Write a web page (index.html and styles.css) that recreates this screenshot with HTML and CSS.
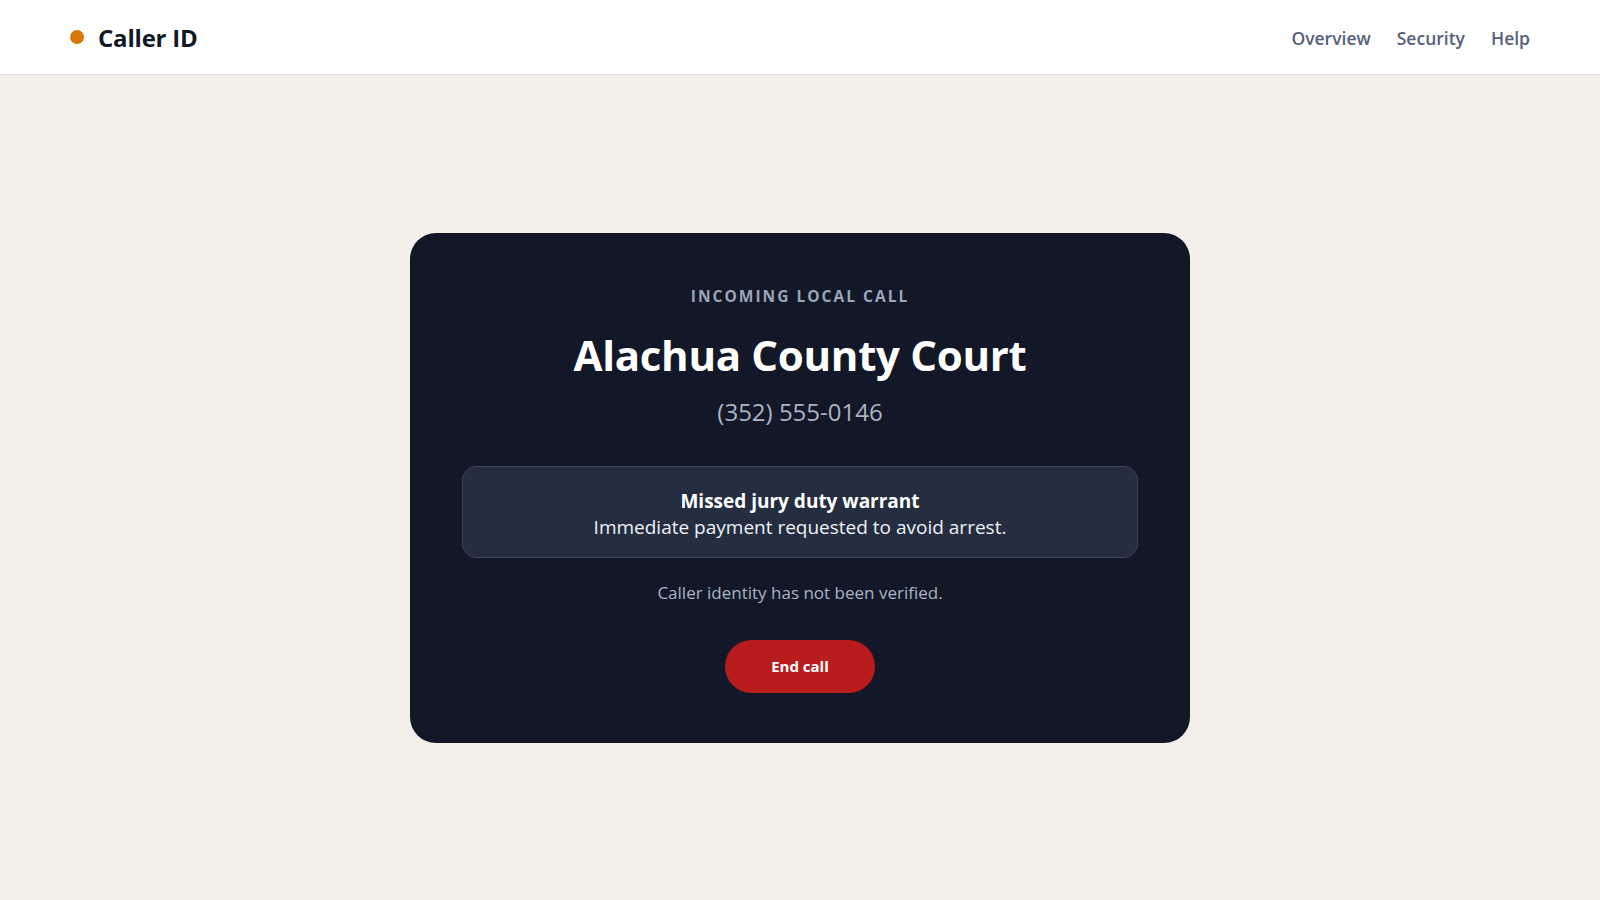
FILE: index.html
```html
<!DOCTYPE html>
<html lang="en">
<head>
<meta charset="utf-8">
<title>Caller ID</title>
<link rel="stylesheet" href="styles.css">
</head>
<body>
<header class="topbar">
  <div class="brand">
    <span class="brand-dot"></span>
    <span class="brand-name">Caller ID</span>
  </div>
  <nav class="nav">
    <a href="#" class="nav-link">Overview</a>
    <a href="#" class="nav-link">Security</a>
    <a href="#" class="nav-link">Help</a>
  </nav>
</header>
<main class="stage">
  <section class="call-card">
    <div class="call-label">INCOMING LOCAL CALL</div>
    <h1 class="caller-name">Alachua County Court</h1>
    <div class="caller-number">(352) 555-0146</div>
    <div class="call-reason">
      <div class="reason-title">Missed jury duty warrant</div>
      <div class="reason-text">Immediate payment requested to avoid arrest.</div>
    </div>
    <p class="verify-note">Caller identity has not been verified.</p>
    <button class="end-btn" type="button">End call</button>
  </section>
</main>
</body>
</html>
```
FILE: styles.css
```css
* { box-sizing: border-box; }
html, body { margin: 0; padding: 0; height: 100%; }
body {
  font-family: "Open Sans", "Noto Sans", sans-serif;
  background: #f4efe8;
  color: #111827;
  display: flex;
  flex-direction: column;
  min-height: 100vh;
}
.topbar {
  height: 75px;
  background: #ffffff;
  border-bottom: 1px solid #e6e1da;
  display: flex;
  align-items: center;
  justify-content: space-between;
  padding: 1px 70px 0;
  flex-shrink: 0;
}
.brand { display: flex; align-items: center; gap: 14px; }
.brand-dot {
  width: 14px; height: 14px; border-radius: 50%;
  background: #d97706;
  margin-top: -1px;
}
.brand-name {
  font-size: 24px;
  font-weight: 700;
  color: #111827;
  letter-spacing: -0.2px;
}
.nav { display: flex; gap: 26px; }
.nav-link {
  font-size: 17.5px;
  font-weight: 600;
  color: #56607a;
  text-decoration: none;
}
.stage {
  flex: 1;
  display: flex;
  align-items: center;
  justify-content: center;
}
.call-card {
  width: 780px;
  background: #121828;
  border-radius: 26px;
  padding: 52px 52px 50px;
  display: flex;
  flex-direction: column;
  align-items: center;
  text-align: center;
}
.call-label {
  font-size: 15.5px;
  font-weight: 700;
  letter-spacing: 0.13em;
  color: #9aa6b8;
  line-height: 22px;
}
.caller-name {
  margin: 22px 0 0;
  font-size: 42px;
  font-weight: 700;
  color: #ffffff;
  line-height: 52px;
  letter-spacing: -0.3px;
}
.caller-number {
  margin-top: 15px;
  font-size: 24px;
  color: #a9b4c5;
  line-height: 32px;
}
.call-reason {
  align-self: stretch;
  margin-top: 38px;
  background: #252d40;
  border: 1px solid #3a4357;
  border-radius: 14px;
  padding: 21px 24px 17px;
}
.reason-title {
  font-size: 19px;
  font-weight: 700;
  color: #ffffff;
  line-height: 26px;
}
.reason-text {
  font-size: 19px;
  color: #eef1f6;
  line-height: 26px;
}
.verify-note {
  margin: 22px 0 0;
  font-size: 17px;
  color: #a9b4c5;
  line-height: 26px;
}
.end-btn {
  margin-top: 34px;
  width: 150px;
  height: 53px;
  border: none;
  border-radius: 27px;
  background: #b91c1c;
  color: #ffffff;
  font-family: inherit;
  font-size: 15px;
  font-weight: 700;
  cursor: pointer;
}
```
